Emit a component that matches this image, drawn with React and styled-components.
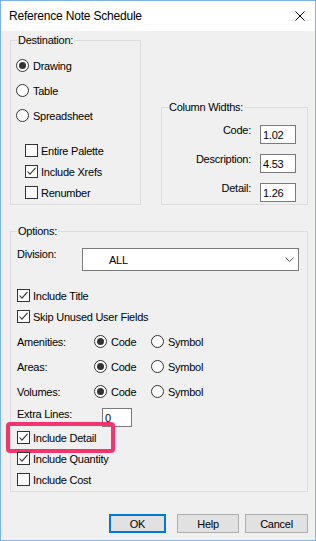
import React from "react";
import styled, { createGlobalStyle } from "styled-components";

const Global = createGlobalStyle`
  html, body { margin: 0; padding: 0; background: #f0f0f0; }
  body { font-family: "Liberation Sans", Arial, sans-serif; }
  *, *::before, *::after { box-sizing: border-box; }
`;

const Window = styled.div`
  width: 316px;
  height: 541px;
  border: 1px solid #7cb2e8;
  background: #f0f0f0;
  display: flex;
  flex-direction: column;
  font-family: "Liberation Sans", Arial, sans-serif;
  font-size: 11px;
  letter-spacing: -0.25px;
  color: #000;
  overflow: hidden;
`;

const TitleBar = styled.div`
  height: 30px;
  flex: none;
  background: #fff;
  display: flex;
  align-items: center;
  justify-content: space-between;
  padding: 0 10px 0 8px;
`;

const TitleText = styled.span`
  font-size: 12px;
  letter-spacing: -0.2px;
  line-height: 16px;
`;

const Content = styled.div`
  padding: 9px 7px 0 9px;
  display: flex;
  flex-direction: column;
`;

const TopRow = styled.div`
  display: flex;
  align-items: flex-end;
  gap: 20px;
`;

const Group = styled.div`
  position: relative;
  border: 1px solid #dcdcdc;
  width: ${(p) => p.$w}px;
  height: ${(p) => p.$h}px;
  padding: ${(p) => p.$pad};
  margin-top: ${(p) => p.$mt || 0}px;
  display: flex;
  flex-direction: column;
`;

const GroupLabel = styled.span`
  position: absolute;
  top: -7px;
  left: 6px;
  padding: 0 1px;
  background: #f0f0f0;
  line-height: 13px;
`;

const RadioRow = styled.label`
  display: flex;
  align-items: center;
  height: 25px;
  gap: 4px;
`;

const RadioCircle = styled.span`
  width: 13px;
  height: 13px;
  flex: none;
  border: 1px solid #333;
  border-radius: 50%;
  background: #fff;
  display: flex;
  align-items: center;
  justify-content: center;
  &::after {
    content: "";
    width: 7px;
    height: 7px;
    border-radius: 50%;
    background: ${(p) => (p.$on ? "#333" : "transparent")};
  }
`;

const CheckList = styled.div`
  display: flex;
  flex-direction: column;
  margin-top: ${(p) => p.$mt || 0}px;
  padding-left: ${(p) => p.$indent || 0}px;
`;

const CheckRow = styled.label`
  position: relative;
  display: flex;
  align-items: center;
  height: 21px;
  gap: 3px;
`;

const Box = styled.span`
  width: 13px;
  height: 13px;
  flex: none;
  border: 1px solid #333;
  background: #fff;
  display: flex;
  align-items: center;
  justify-content: center;
`;

const Highlight = styled.span`
  position: absolute;
  left: -11px;
  top: -5px;
  width: 109px;
  height: 31px;
  border: 4px solid #f5336e;
  border-radius: 4px;
  pointer-events: none;
`;

const WidthRows = styled.div`
  display: flex;
  flex-direction: column;
  gap: 10px;
`;

const WidthRow = styled.div`
  display: flex;
  justify-content: flex-end;
  align-items: flex-start;
  gap: 9px;
`;

const FieldLabel = styled.span`
  line-height: 13px;
  width: ${(p) => (p.$w ? `${p.$w}px` : "auto")};
  flex: none;
  margin-top: ${(p) => p.$mt || 0}px;
`;

const TextBox = styled.input`
  width: ${(p) => p.$w}px;
  height: 19px;
  border: 1px solid #7a7a7a;
  background: #fff;
  padding: 0 2px;
  margin: 0;
  font: inherit;
  letter-spacing: inherit;
  color: #000;
  line-height: 17px;
  outline: none;
`;

const DivisionRow = styled.div`
  display: flex;
  align-items: flex-start;
  height: 23px;
`;

const Select = styled.div`
  width: 217px;
  height: 23px;
  border: 1px solid #7a7a7a;
  background: #fff;
  display: flex;
  align-items: center;
  justify-content: space-between;
  padding: 0 4px 0 26px;
`;

const OptionRadios = styled.div`
  display: flex;
  flex-direction: column;
  margin-top: 2px;
`;

const OptionRow = styled.div`
  display: grid;
  grid-template-columns: 77px 57px auto;
  align-items: center;
  height: 25px;
`;

const ExtraRow = styled.div`
  display: flex;
  align-items: flex-start;
  height: 19px;
  margin-top: 4px;
`;

const ButtonRow = styled.div`
  display: flex;
  justify-content: flex-end;
  gap: 6px;
  margin-top: 22px;
`;

const Button = styled.button`
  width: ${(p) => p.$w}px;
  height: 19px;
  margin: 0 ${(p) => (p.$primary ? 5 : 0)}px 0 0;
  padding: 0;
  background: #e1e1e1;
  border: ${(p) => (p.$primary ? "2px solid #0078d7" : "1px solid #adadad")};
  font: inherit;
  letter-spacing: inherit;
  color: #000;
  display: flex;
  align-items: center;
  justify-content: center;
`;

const CloseIcon = () => (
  <svg width="10" height="10" viewBox="0 0 10 10">
    <path d="M0.5 0.5 L9.5 9.5 M9.5 0.5 L0.5 9.5" stroke="#000" strokeWidth="1" />
  </svg>
);

const Chevron = () => (
  <svg width="9" height="5" viewBox="0 0 9 5">
    <path d="M0.5 0.5 L4.5 4.5 L8.5 0.5" stroke="#555" strokeWidth="1" fill="none" />
  </svg>
);

const Check = () => (
  <svg width="11" height="11" viewBox="0 0 11 11">
    <path d="M1.5 5.5 L4 8.2 L9.5 1.8" stroke="#333" strokeWidth="1.1" fill="none" />
  </svg>
);

const Radio = ({ on, children }) => (
  <RadioRow>
    <RadioCircle $on={on} />
    <span>{children}</span>
  </RadioRow>
);

const CheckItem = ({ on, children, highlight }) => (
  <CheckRow>
    <Box>{on && <Check />}</Box>
    <span>{children}</span>
    {highlight && <Highlight />}
  </CheckRow>
);

const OptionRadioLine = ({ label }) => (
  <OptionRow>
    <span>{label}</span>
    <Radio on>Code</Radio>
    <Radio>Symbol</Radio>
  </OptionRow>
);

export default function App() {
  return (
    <>
      <Global />
      <Window>
        <TitleBar>
          <TitleText>Reference Note Schedule</TitleText>
          <CloseIcon />
        </TitleBar>
        <Content>
          <TopRow>
            <Group $w={131} $h={165} $pad="12px 0 0 5px">
              <GroupLabel>Destination:</GroupLabel>
              <Radio on>Drawing</Radio>
              <Radio>Table</Radio>
              <Radio>Spreadsheet</Radio>
              <CheckList $mt={12} $indent={9}>
                <CheckItem>Entire Palette</CheckItem>
                <CheckItem on>Include Xrefs</CheckItem>
                <CheckItem>Renumber</CheckItem>
              </CheckList>
            </Group>
            <Group $w={147} $h={98} $pad="17px 11px 0 0">
              <GroupLabel>Column Widths:</GroupLabel>
              <WidthRows>
                <WidthRow>
                  <FieldLabel $mt={-1}>Code:</FieldLabel>
                  <TextBox $w={36} defaultValue="1.02" readOnly />
                </WidthRow>
                <WidthRow>
                  <FieldLabel $mt={-1}>Description:</FieldLabel>
                  <TextBox $w={36} defaultValue="4.53" readOnly />
                </WidthRow>
                <WidthRow>
                  <FieldLabel $mt={-1}>Detail:</FieldLabel>
                  <TextBox $w={36} defaultValue="1.26" readOnly />
                </WidthRow>
              </WidthRows>
            </Group>
          </TopRow>

          <Group $w={298} $h={261} $mt={26} $pad="16px 0 0 6px">
            <GroupLabel>Options:</GroupLabel>
            <DivisionRow>
              <FieldLabel $w={65}>Division:</FieldLabel>
              <Select>
                <span>ALL</span>
                <Chevron />
              </Select>
            </DivisionRow>
            <CheckList $mt={14}>
              <CheckItem on>Include Title</CheckItem>
              <CheckItem on>Skip Unused User Fields</CheckItem>
            </CheckList>
            <OptionRadios>
              <OptionRadioLine label="Amenities:" />
              <OptionRadioLine label="Areas:" />
              <OptionRadioLine label="Volumes:" />
            </OptionRadios>
            <ExtraRow>
              <FieldLabel $w={85}>Extra Lines:</FieldLabel>
              <TextBox $w={30} defaultValue="0" readOnly />
            </ExtraRow>
            <CheckList>
              <CheckItem on highlight>Include Detail</CheckItem>
              <CheckItem on>Include Quantity</CheckItem>
              <CheckItem>Include Cost</CheckItem>
            </CheckList>
          </Group>

          <ButtonRow>
            <Button $w={57} $primary>OK</Button>
            <Button $w={62}>Help</Button>
            <Button $w={63}>Cancel</Button>
          </ButtonRow>
        </Content>
      </Window>
    </>
  );
}
